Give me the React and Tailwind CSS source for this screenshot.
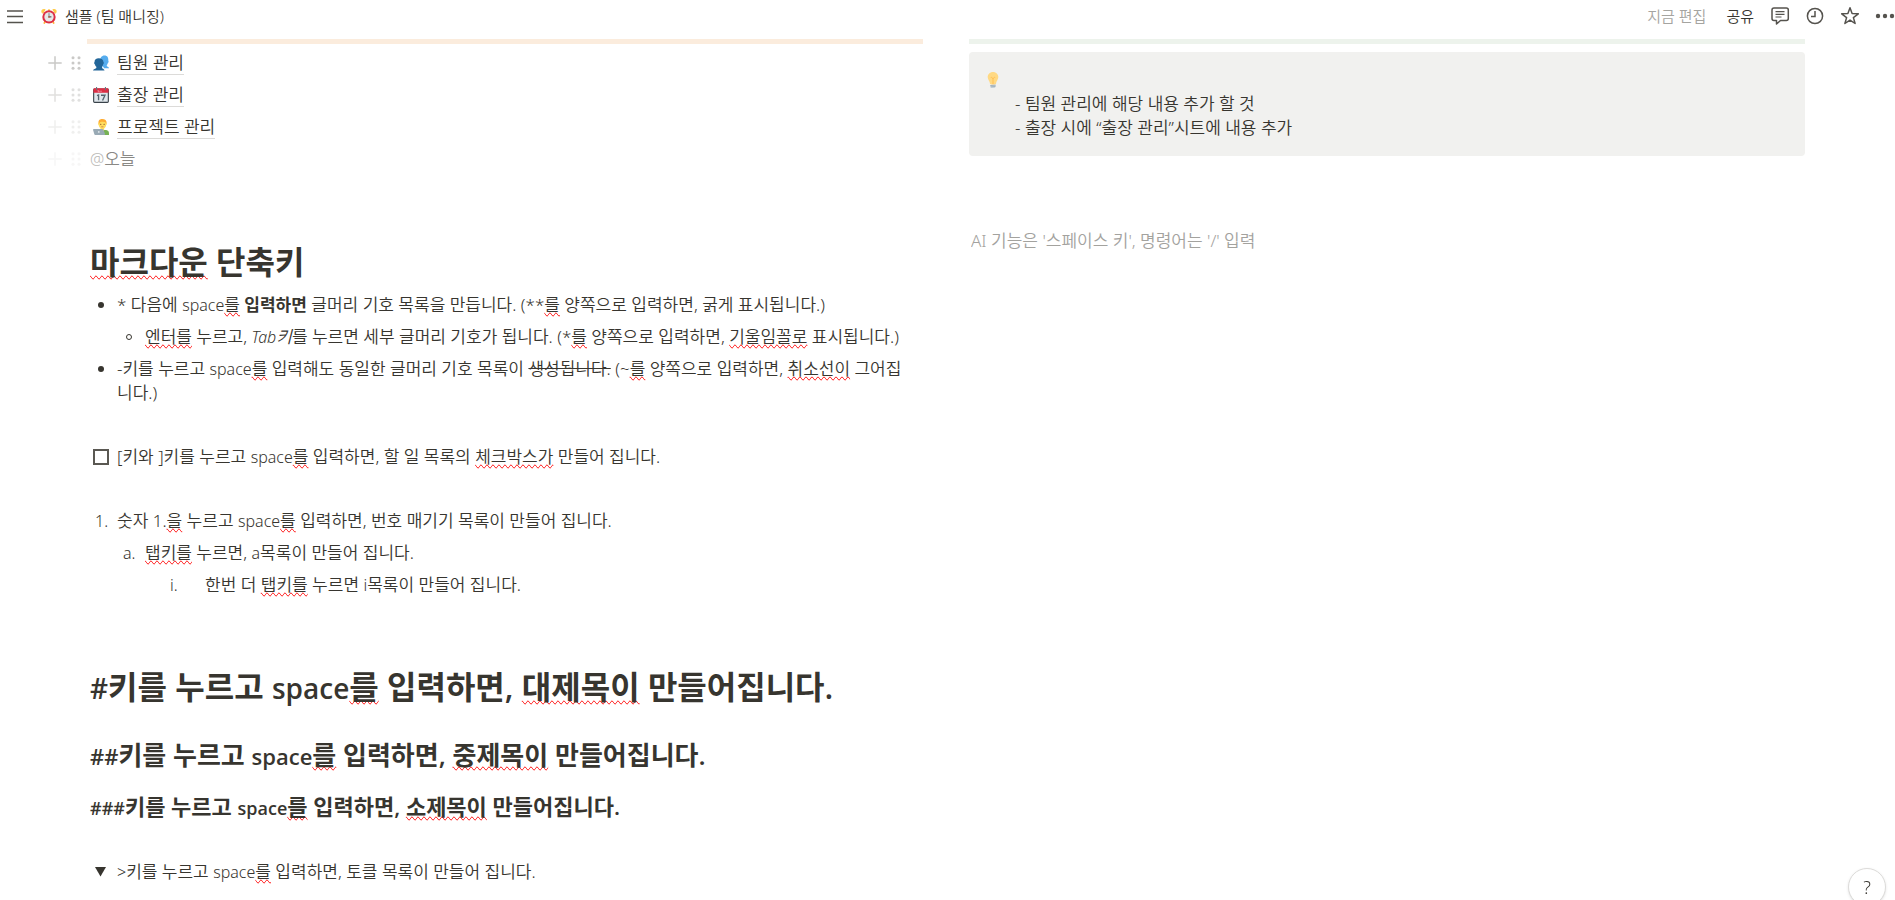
import React from "react";

function Typo({ children }) {
  return <span className="[text-decoration-line:spelling-error]">{children}</span>;
}

function Latin({ children, size = "text-[16px]" }) {
  return <span className={`${size} leading-none`}>{children}</span>;
}

function AlarmClock() {
  return (
    <svg viewBox="0 0 36 36" className="size-4" aria-hidden="true">
      <path fill="#FFCC4D" d="M20 6.04c0 1.1-.9 2-2 2s-2-.9-2-2v-2c0-1.1.9-2 2-2s2 .9 2 2v2zM9.2 5.9c1.5-1.5 1.5-2.7-.7-3.5C6 1.500 3 2.300 1.600 4.600.2 7 .6 9.900 2.300 11.600c1 1 2 .8 2.700.1zM26.800 5.900c-1.500-1.500-1.500-2.700.7-3.500 2.500-.9 5.500-.1 6.900 2.200 1.400 2.400 1 5.300-.7 7-1 1-2 .8-2.700.1z" />
      <path fill="#FFAC33" d="M6.500 35.500c-1.200-.6-1.100-1.800-.5-3l2-4 3.500 2-2 4c-.6 1.100-1.800 1.600-3 1zM29.500 35.500c1.200-.6 1.100-1.800.5-3l-2-4-3.500 2 2 4c.6 1.100 1.800 1.600 3 1z" />
      <circle fill="#DD2E44" cx="18" cy="20" r="15" />
      <circle fill="#E6E7E8" cx="18" cy="20" r="10.500" />
      <path stroke="#66757F" strokeWidth="2" strokeLinecap="round" d="M18 20V12.500" />
      <path stroke="#292F33" strokeWidth="2" strokeLinecap="round" d="M18 20h4.500" />
      <circle fill="#C1694F" cx="18" cy="20" r="2" />
    </svg>
  );
}

function People() {
  return (
    <svg viewBox="0 0 36 36" className="size-4" aria-hidden="true">
      <path fill="#55ACEE" d="M24 27c-3-.5-3.500-2-3.500-4-3-2-5-5-4.500-9C16 6 19 1 26 1c6.500 0 9 5 8.500 12 1 1 1 4-1 5-.5 2.500-1.500 4-2.500 5v2c1 1.500 4 1.500 5 4v1H24z" />
      <path fill="#226699" d="M20.500 26c1.500-1.500 2-3 2.500-5 1.500-1 2-4 .5-5C23.500 10.500 19 7.500 13 7.500S3 11 3.500 16c-1.500 1-1 4.500 1 5.500.5 2 1 3.500 3 5v3C6 31.500 1 31 0 35h26c-1-4-4.500-3.500-5.500-5.500z" />
    </svg>
  );
}

function Calendar() {
  return (
    <svg viewBox="0 0 36 36" className="size-4" aria-hidden="true">
      <rect fill="#E0E7EC" x="1.500" y="4.500" width="33" height="30" rx="2" stroke="#394249" strokeWidth="2.500" />
      <path fill="#DD2E44" d="M1 13V6c0-2 1-3 3-3h28c2 0 3 1 3 3v7z" />
      <path stroke="#F4ABBA" strokeWidth="1.500" d="M10 8.500h4M11 10.500h4M16 9.500h4" />
      <path stroke="#66757F" strokeWidth="2.500" strokeLinecap="round" d="M8 1v5M28 1v5" />
      <path fill="none" stroke="#55646F" strokeWidth="3" d="M9 19.500l3.500-1.500v12M18 18.500h9l-5.500 12" />
    </svg>
  );
}

function Technologist() {
  return (
    <svg viewBox="0 0 36 36" className="size-4" aria-hidden="true">
      <path fill="#77B255" d="M10 36v-5c0-4 3-6 6-6h13c4 0 7 3 7 7v4z" />
      <path fill="#FFDC5D" d="M17 20h8v6c-2 3-6 3-8 0z" />
      <path fill="#FFDC5D" d="M12.500 9c0-5 3-7.500 8.500-7.500S30 4 30 9c1.500.5 1.500 4-.2 4.500C29 18.500 26 22 21.200 22S13.500 18.500 12.700 13.500c-1.700-.5-1.700-4-.2-4.500z" />
      <path fill="#FFAC33" d="M21 0c6 0 10 4 9.500 8l-1 3c-1-4-2-4.500-4-4.500-3 0-5-.5-6.500-.5-3 0-4 2-5.500 5C11 5 13 0 21 0z" />
      <circle fill="#662113" cx="17.500" cy="12" r="1.200" />
      <circle fill="#662113" cx="25" cy="12" r="1.200" />
      <path fill="none" stroke="#C1694F" strokeWidth="1.500" d="M18.500 17.500h5" />
      <path fill="#99AAB5" d="M0 24c0-1 1-1.500 2-1.500h19c1 0 2 .5 2.500 1.500L27 34c.3 1.200-.5 2-1.500 2H5c-1 0-1.800-.5-2-1.500z" />
      <circle fill="#E1E8ED" cx="13" cy="29" r="2" />
    </svg>
  );
}

function Bulb() {
  return (
    <svg viewBox="0 0 36 36" className="size-4" aria-hidden="true">
      <path fill="#FFD983" d="M30 11.100C30 17.300 24.800 20 24.800 26.700c0 .7-1.800 1.300-2.600 1.300h-8.500c-.8 0-2.500-.6-2.500-1.300C11.200 20 6 17.300 6 11.100 6 5 11.400 0 18 0s12 5 12 11.100z" />
      <path fill="none" stroke="#FFAC33" strokeWidth="1.300" d="M13 12.500c2-1.500 4 1 5 2.500 1-1.500 3-4 5-2.500M18 15v12.500" />
      <path fill="#CCD6DD" d="M12 29h12v3c0 2-2 4-4 4h-4c-2 0-4-2-4-4z" />
      <path stroke="#99AAB5" strokeWidth="1.800" d="M12 30.500l12-1M12.500 33.500l11-1" />
    </svg>
  );
}

function Handles({ fade }) {
  return (
    <span className={`flex items-center gap-2 text-[#b4b3b0] ${fade}`}>
      <button type="button" aria-label="블록 추가" className="flex w-4 justify-center">
        <svg viewBox="0 0 14 14" className="size-3.5" fill="none" stroke="currentColor" strokeWidth="1.500">
          <path d="M7 0.300v13.400M0.300 7h13.400" />
        </svg>
      </button>
      <button type="button" aria-label="블록 이동" className="flex w-2.5 justify-center">
        <svg viewBox="0 0 10 14" className="h-3.5 w-2.5" fill="currentColor">
          <circle cx="2" cy="1.700" r="1.500" /><circle cx="8" cy="1.700" r="1.500" />
          <circle cx="2" cy="7" r="1.500" /><circle cx="8" cy="7" r="1.500" />
          <circle cx="2" cy="12.300" r="1.500" /><circle cx="8" cy="12.300" r="1.500" />
        </svg>
      </button>
    </span>
  );
}

function PageLink({ icon, fade, children }) {
  return (
    <div className="-ml-[43px] flex items-center py-1">
      <Handles fade={fade} />
      <span className="ml-3 w-6 shrink-0">{icon}</span>
      <a href="#page" className="border-b border-[#dcdbd9] leading-[23px]">{children}</a>
    </div>
  );
}

function Blank() {
  return <div className="h-8" />;
}

function Marker({ width, children }) {
  return <span className={`flex h-6 shrink-0 items-center ${width}`}>{children}</span>;
}

const Dot = () => <span className="ml-2 size-1.5 rounded-full bg-[#37352f]" />;
const Ring = () => <span className="ml-2 size-1.5 rounded-full border border-[#37352f]" />;

export default function App() {
  return (
    <div className="relative min-h-screen overflow-x-hidden bg-white font-['Noto_Sans','Noto_Sans_CJK_KR',sans-serif] text-[17px] leading-6 font-[350] text-[#37352f]">
      <header className="flex h-8 items-center pl-1.5 text-[15px]">
        <button type="button" aria-label="메뉴" className="size-[18px]">
          <svg viewBox="0 0 18 18" className="size-[18px]" stroke="#55534e" strokeWidth="1.500">
            <path d="M1 4h16M1 9.500h16M1 15.500h16" />
          </svg>
        </button>
        <a href="#home" className="ml-[17px] flex items-center gap-2">
          <AlarmClock />
          <span>샘플 (팀 매니징)</span>
        </a>
        <div className="ml-auto flex items-center">
          <span className="mr-5 text-[#a5a4a0]">지금 편집</span>
          <button type="button" className="mr-4">공유</button>
          <div className="flex items-center gap-[15px] text-[#55534e]">
            <button type="button" aria-label="댓글">
              <svg viewBox="0 0 20 20" className="size-5" fill="none" stroke="currentColor" strokeWidth="1.500" strokeLinejoin="round">
                <path d="M4 2h12.300a2 2 0 0 1 2 2v8.500a2 2 0 0 1-2 2H10.500l-4 3.500V14.500H4a2 2 0 0 1-2-2V4a2 2 0 0 1 2-2z" />
                <path strokeWidth="1.200" d="M5.500 5.700h9M5.500 8.300h9M5.500 11h6" />
              </svg>
            </button>
            <button type="button" aria-label="업데이트 기록">
              <svg viewBox="0 0 20 20" className="size-5" fill="none" stroke="currentColor" strokeWidth="1.500">
                <circle cx="10" cy="10" r="7.600" />
                <path d="M10 5v5.500H6" />
              </svg>
            </button>
            <button type="button" aria-label="즐겨찾기">
              <svg viewBox="0 0 20 20" className="size-5" fill="none" stroke="currentColor" strokeWidth="1.500" strokeLinejoin="round">
                <path d="M10 1.800l2.100 5.800 6.200.2-4.900 3.800 1.700 5.900-5.100-3.400-5.100 3.400 1.700-5.900L1.700 7.800l6.200-.2z" />
              </svg>
            </button>
            <button type="button" aria-label="더 보기">
              <svg viewBox="0 0 20 20" className="size-5" fill="currentColor">
                <circle cx="3" cy="10" r="2.200" /><circle cx="10" cy="10" r="2.200" /><circle cx="17" cy="10" r="2.200" />
              </svg>
            </button>
          </div>
        </div>
      </header>

      <main className="grid grid-cols-2 gap-[46px] pt-[7px] pr-[90px] pl-[87px]">
        <section>
          <div className="h-[5px] bg-[#fbecdd]" />
          <div className="pt-[3px] pl-[3px]">
            <PageLink icon={<People />} fade="opacity-70">팀원 관리</PageLink>
            <PageLink icon={<Calendar />} fade="opacity-40">출장 관리</PageLink>
            <PageLink icon={<Technologist />} fade="opacity-20">프로젝트 관리</PageLink>
            <div className="-ml-[43px] flex items-center py-1">
              <Handles fade="opacity-10" />
              <span className="ml-[9px] text-[#8a8985]"><span className="text-[16px] leading-none text-[#b9b8b5]">@</span>오늘</span>
            </div>
            <Blank />

            <h1 className="pt-[35px] pb-[7px] font-['Open_Sans','Noto_Sans_CJK_KR',sans-serif] text-[32px] leading-10 font-semibold"><Typo>마크다운</Typo> 단축키</h1>
            <ul>
              <li className="flex py-1">
                <Marker width="w-[27px]"><Dot /></Marker>
                <span>* 다음에 <Latin>space</Latin><Typo>를</Typo> <strong className="font-semibold">입력하면</strong> 글머리 기호 목록을 만듭니다. (**<Typo>를</Typo> 양쪽으로 입력하면, 굵게 표시됩니다.)</span>
              </li>
              <li>
                <ul className="pl-7">
                  <li className="flex py-1">
                    <Marker width="w-[27px]"><Ring /></Marker>
                    <span><Typo>엔터를</Typo> 누르고, <em><Latin>Tab</Latin>키</em>를 누르면 세부 글머리 기호가 됩니다. (*<Typo>를</Typo> 양쪽으로 입력하면, <Typo>기울임꼴로</Typo> 표시됩니다.)</span>
                  </li>
                </ul>
              </li>
              <li className="flex py-1">
                <Marker width="w-[27px]"><Dot /></Marker>
                <span>-키를 누르고 <Latin>space</Latin><Typo>를</Typo> 입력해도 동일한 글머리 기호 목록이 <s>생성됩니다.</s> (~<Typo>를</Typo> 양쪽으로 입력하면, <Typo>취소선이</Typo> 그어집<br />니다.)</span>
              </li>
            </ul>
            <Blank />
            <label className="flex py-1">
              <Marker width="w-[27px]">
                <input type="checkbox" className="ml-[3px] size-4 appearance-none border-2 border-[#5a5852] bg-white" />
              </Marker>
              <span>[키와 ]키를 누르고 <Latin>space</Latin><Typo>를</Typo> 입력하면, 할 일 목록의 <Typo>체크박스가</Typo> 만들어 집니다.</span>
            </label>
            <Blank />
            <ol>
              <li className="flex py-1">
                <Marker width="w-[27px] pl-[5px]"><Latin>1.</Latin></Marker>
                <span>숫자 1.<Typo>을</Typo> 누르고 <Latin>space</Latin><Typo>를</Typo> 입력하면, 번호 매기기 목록이 만들어 집니다.</span>
              </li>
              <li>
                <ol className="pl-7">
                  <li className="flex py-1">
                    <Marker width="w-[27px] pl-[5px]"><Latin>a.</Latin></Marker>
                    <span><Typo>탭키를</Typo> 누르면, <Latin>a</Latin>목록이 만들어 집니다.</span>
                  </li>
                  <li>
                    <ol className="pl-12">
                      <li className="flex py-1">
                        <Marker width="w-[39px] pl-[4px]"><Latin>i.</Latin></Marker>
                        <span>한번 더 <Typo>탭키를</Typo> 누르면 <Latin>i</Latin>목록이 만들어 집니다.</span>
                      </li>
                    </ol>
                  </li>
                </ol>
              </li>
            </ol>
            <Blank />
            <div className="font-['Open_Sans','Noto_Sans_CJK_KR',sans-serif] font-semibold">
              <h1 className="pt-[34px] pb-2 text-[32px] leading-10"><Latin size="text-[28px]">#</Latin>키를 누르고 <Latin size="text-[28px]">space</Latin><Typo>를</Typo> 입력하면, <Typo>대제목이</Typo> 만들어집니다.</h1>
              <h2 className="pt-6 pb-1 text-[26px] leading-8"><Latin size="text-[22px]">##</Latin>키를 누르고 <Latin size="text-[22px]">space</Latin><Typo>를</Typo> 입력하면, <Typo>중제목이</Typo> 만들어집니다.</h2>
              <h3 className="pt-[17px] pb-1 text-[22px] leading-7"><Latin size="text-[18px]">###</Latin>키를 누르고 <Latin size="text-[18px]">space</Latin><Typo>를</Typo> 입력하면, <Typo>소제목이</Typo> 만들어집니다.</h3>
            </div>
            <Blank />
            <div className="flex py-1">
              <Marker width="w-[27px]">
                <button type="button" aria-label="토글 접기" className="ml-[5px]">
                  <svg viewBox="0 0 11 10" className="h-2.5 w-[11px]" fill="#37352f"><path d="M0 0h11L5.500 9.500z" /></svg>
                </button>
              </Marker>
              <span><Latin>&gt;</Latin>키를 누르고 <Latin>space</Latin><Typo>를</Typo> 입력하면, 토클 목록이 만들어 집니다.</span>
            </div>
          </div>
        </section>

        <section>
          <div className="h-[5px] bg-[#edf3ec]" />
          <aside className="mt-2 flex rounded bg-[#f1f1ef] p-4">
            <span className="flex h-6 w-[30px] items-center"><Bulb /></span>
            <ul className="pt-6">
              <li>- 팀원 관리에 해당 내용 추가 할 것</li>
              <li>- 출장 시에 “출장 관리”시트에 내용 추가</li>
            </ul>
          </aside>
          <input
            type="text"
            aria-label="새 블록"
            placeholder="AI 기능은 '스페이스 키', 명령어는 '/' 입력"
            className="mt-[68px] h-8 w-full bg-transparent pl-0.5 outline-none placeholder:text-[#a3a29e]"
          />
        </section>
      </main>

      <button type="button" aria-label="도움말" className="fixed right-[9px] -bottom-1.5 size-[38px] rounded-full border border-[#dcdbd9] bg-white text-lg shadow-sm">?</button>
    </div>
  );
}
